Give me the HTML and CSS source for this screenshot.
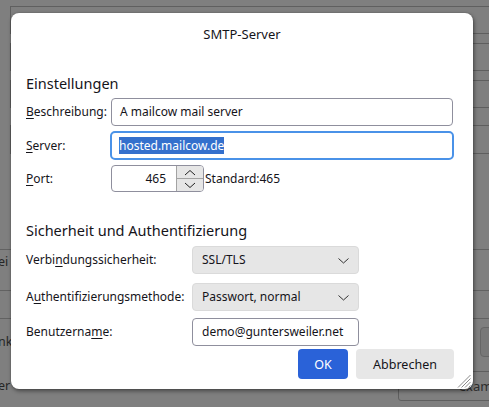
FILE: index.html
```html
<!DOCTYPE html>
<html lang="de">
<head>
<meta charset="utf-8">
<title>SMTP-Server</title>
<link rel="stylesheet" href="styles.css">
</head>
<body>
<div class="backdrop">
  <div class="bg-fields">
    <div class="bg-field"></div>
    <div class="bg-field"></div>
    <div class="bg-field"></div>
    <div class="bg-field last"></div>
  </div>
  <div class="bg-sep"></div>
  <div class="bg-row a"><span class="bg-txt">ei</span></div>
  <div class="bg-row b"></div>
  <div class="bg-row c"><span class="bg-txt">nk</span><span class="bg-btn"></span></div>
  <div class="bg-row d"><span class="bg-txt">er</span><span class="bg-input">example.</span></div>
</div>

<div class="dialog">
  <div class="dlg-title">SMTP-Server</div>
  <div class="dlg-body">
    <h2 class="section-title first">Einstellungen</h2>
    <div class="grid1">
      <label class="lbl"><u>B</u>eschreibung:</label>
      <div class="textbox">A mailcow mail server</div>
      <label class="lbl"><u>S</u>erver:</label>
      <div class="textbox focused"><span class="sel">hosted.mailcow.de</span></div>
      <label class="lbl"><u>P</u>ort:</label>
      <div class="port-row">
        <div class="spinbox">
          <span class="spin-val">465</span>
          <div class="spin-btns">
            <span class="spin-btn up"><svg width="12" height="7" viewBox="0 0 12 7"><polyline points="1,6 6,1.5 11,6" fill="none" stroke="#222" stroke-width="1"/></svg></span>
            <span class="spin-btn down"><svg width="12" height="7" viewBox="0 0 12 7"><polyline points="1,1 6,5.5 11,1" fill="none" stroke="#222" stroke-width="1"/></svg></span>
          </div>
        </div>
        <span class="std">Standard:465</span>
      </div>
    </div>
    <h2 class="section-title second">Sicherheit und Authentifizierung</h2>
    <div class="grid2">
      <div class="row r1">
        <label class="lbl">Verbi<u>n</u>dungssicherheit:</label>
        <div class="select"><span>SSL/TLS</span><svg width="11" height="6" viewBox="0 0 11 6"><polyline points="0.5,0.5 5.5,5 10.5,0.5" fill="none" stroke="#333" stroke-width="1"/></svg></div>
      </div>
      <div class="row r2">
        <label class="lbl">A<u>u</u>thentifizierungsmethode:</label>
        <div class="select"><span>Passwort, normal</span><svg width="11" height="6" viewBox="0 0 11 6"><polyline points="0.5,0.5 5.5,5 10.5,0.5" fill="none" stroke="#333" stroke-width="1"/></svg></div>
      </div>
      <div class="row r3">
        <label class="lbl">Benutzerna<u>m</u>e:</label>
        <div class="textbox small">demo@guntersweiler.net</div>
      </div>
    </div>
  </div>
  <div class="dlg-footer">
    <button class="btn primary">OK</button>
    <button class="btn">Abbrechen</button>
  </div>
  <svg class="grip" width="14" height="14" viewBox="0 0 14 14">
    <line x1="13.5" y1="1" x2="1" y2="13.5" stroke="#8a8a8a" stroke-width="1"/>
    <line x1="13.5" y1="4.5" x2="4.5" y2="13.5" stroke="#8a8a8a" stroke-width="1"/>
    <line x1="13.5" y1="8" x2="8" y2="13.5" stroke="#8a8a8a" stroke-width="1"/>
    <line x1="13.5" y1="11.5" x2="11.5" y2="13.5" stroke="#8a8a8a" stroke-width="1"/>
  </svg>
</div>
</body>
</html>
```

FILE: styles.css
```css
html, body {
  margin: 0;
  padding: 0;
}
body {
  width: 489px;
  height: 407px;
  overflow: hidden;
  background: #7f7f7f;
  font-family: "Noto Sans", "Open Sans", sans-serif;
  font-size: 12px;
  color: #15141a;
  position: relative;
}

/* ---------- dimmed background window ---------- */
.backdrop {
  width: 489px;
  height: 407px;
  overflow: hidden;
}
.bg-fields {
  padding: 6px 0 0 10px;
  display: flex;
  flex-direction: column;
  gap: 9px;
}
.bg-field {
  box-sizing: border-box;
  height: 28px;
  border: 1px solid #5f5f5f;
  border-right: 0;
}
.bg-field.last {
  margin-top: 8px;
  height: 29px;
}
.bg-sep {
  margin-top: 95px;
  height: 1px;
  background: #626262;
}
.bg-row {
  box-sizing: border-box;
  display: flex;
  align-items: flex-start;
  position: relative;
}
.bg-row.a {
  height: 41px;
  border-bottom: 1px solid #626262;
  padding-top: 4px;
}
.bg-row.b {
  height: 28px;
  border-bottom: 1px solid #626262;
}
.bg-row.c {
  height: 51px;
  padding-top: 15px;
  justify-content: space-between;
}
.bg-row.c .bg-btn {
  margin-top: -7px;
  width: 30px;
  height: 28px;
  margin-right: -23px;
  border: 1px solid #666;
  border-radius: 4px;
  background: #787878;
}
.bg-row.d {
  height: 40px;
  justify-content: space-between;
  padding-top: 8px;
}
.bg-txt {
  color: #262626;
  font-size: 12.5px;
  line-height: 16px;
  margin-left: -2px;
}
.bg-input {
  box-sizing: border-box;
  width: 120px;
  height: 30px;
  margin-top: -7px;
  margin-right: -29px;
  border: 1px solid #5f5f5f;
  border-radius: 3px;
  padding: 6px 0 0 60px;
  color: #2d2d2d;
  font-size: 13px;
  line-height: 17px;
  white-space: nowrap;
}

/* ---------- dialog ---------- */
.dialog {
  position: absolute;
  left: 11px;
  top: 13px;
  width: 462px;
  height: 376px;
  background: #fff;
  border-radius: 8px;
  box-shadow: 1px 2px 4px rgba(0, 0, 0, 0.45), 0 0 2px rgba(0, 0, 0, 0.2);
  display: flex;
  flex-direction: column;
  overflow: hidden;
}
.dlg-title {
  padding-top: 12px;
  height: 18px;
  line-height: 18px;
  text-align: center;
  font-size: 13px;
}
.dlg-body {
  flex: 1;
  overflow: hidden;
  padding: 0 20px 0 15px;
}
.section-title {
  margin: 0;
  font-weight: 400;
  font-size: 14.5px;
  line-height: 20px;
  height: 20px;
}
.section-title.first {
  margin-top: 30px;
}
.section-title.second {
  margin-top: 28px;
}
.lbl {
  line-height: 16px;
  white-space: nowrap;
}
.lbl u {
  text-underline-offset: 2px;
}

.grid1 {
  margin-top: 5px;
  display: grid;
  grid-template-columns: 85px 342px;
  grid-template-rows: 28px 29px 27px;
  row-gap: 5px;
  align-items: center;
}
.textbox {
  box-sizing: border-box;
  height: 28px;
  border: 1px solid #8f8f9d;
  border-radius: 4px;
  padding: 0 8px;
  line-height: 26px;
  white-space: nowrap;
  overflow: hidden;
}
.textbox.focused {
  height: 29px;
  margin: 0 -1px;
  border: 2px solid #4a92e8;
  border-radius: 5px;
  padding: 0 7px;
  line-height: 25px;
  display: flex;
  align-items: center;
}
.sel {
  background: #3470cd;
  color: #fff;
  line-height: 17px;
  display: inline-block;
}
.port-row {
  display: flex;
  align-items: center;
  height: 27px;
}
.spinbox {
  box-sizing: border-box;
  width: 93px;
  height: 27px;
  border: 1px solid #8f8f9d;
  border-radius: 4px;
  display: flex;
  align-items: stretch;
  overflow: hidden;
}
.spin-val {
  flex: 1;
  text-align: right;
  padding-right: 10px;
  line-height: 25px;
}
.spin-btns {
  width: 27px;
  display: flex;
  flex-direction: column;
}
.spin-btn {
  flex: 1;
  box-sizing: border-box;
  background: #e6e6e6;
  border-left: 1px solid #a3a3a3;
  display: flex;
  align-items: center;
  justify-content: center;
}
.spin-btn.up {
  border-bottom: 1px solid #a3a3a3;
}
.std {
  margin-left: 1px;
  line-height: 16px;
}

.grid2 {
  margin-top: 6px;
}
.row {
  display: grid;
  grid-template-columns: 166px 167px;
  align-items: center;
  height: 28px;
}
.row.r2 {
  margin-top: 9px;
}
.row.r3 {
  margin-top: 7px;
}
.select {
  box-sizing: border-box;
  height: 28px;
  background: #e6e6e6;
  border: 1px solid #dadada;
  border-radius: 4px;
  padding: 0 9px 0 9px;
  display: flex;
  align-items: center;
  justify-content: space-between;
  line-height: 16px;
}
.select svg {
  margin-top: 1px;
}
.textbox.small {
  padding: 0 9px;
}

.dlg-footer {
  height: 40px;
  box-sizing: border-box;
  padding: 0 19px 10px 0;
  display: flex;
  justify-content: flex-end;
  align-items: flex-end;
  gap: 8px;
}
.btn {
  height: 30px;
  border: 0;
  border-radius: 4px;
  background: #e7e7e7;
  color: #15141a;
  font-family: "Noto Sans", "Open Sans", sans-serif;
  font-size: 12.5px;
  padding: 0;
  width: 98px;
}
.btn.primary {
  width: 50px;
  background: #2a62d8;
  color: #fff;
}
.grip {
  position: absolute;
  right: 2px;
  bottom: 1px;
}
```
